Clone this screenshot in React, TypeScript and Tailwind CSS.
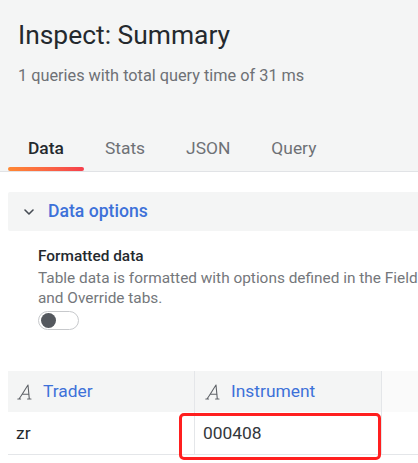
import React from 'react';

const tabs = ['Data', 'Stats', 'JSON', 'Query'];

const ChevronDown = () => (
  <svg width="10" height="6" viewBox="0 0 10 6" fill="none">
    <path d="M1 1l4 4 4-4" stroke="#464c54" strokeWidth="1.6" strokeLinecap="round" strokeLinejoin="round" />
  </svg>
);

// string field type icon (italic A)
const TypeIcon = () => (
  <svg width="16" height="16" viewBox="0 0 16 16" fill="none" className="shrink-0">
    <path
      d="M2 15C4.5 11.5 8 5.5 11 1L12.3 15M5 10.2H12M0.8 15H3.6M10.6 15H14"
      stroke="#5f6368"
      strokeWidth="1.1"
      strokeLinecap="round"
      strokeLinejoin="round"
    />
  </svg>
);

const App: React.FC = () => {
  return (
    <div className="w-[418px] h-[463px] overflow-hidden bg-white font-['Roboto',sans-serif] text-[#24292e]">
      <div className="w-[720px]">
        {/* drawer header */}
        <div className="h-[172px] bg-[#f4f5f5] border-b border-[#e1e3e6] flex flex-col">
          <div className="pl-[18px] pt-[19px]">
            <h2 className="text-[26.4px] leading-[32px] font-normal text-[#24292e]">Inspect: Summary</h2>
            <p className="mt-[15px] text-[16.3px] leading-[20px] text-[#6e7175]">
              1 queries with total query time of 31 ms
            </p>
          </div>
          <div className="mt-auto flex pl-2 gap-px">
            {tabs.map((t, i) => (
              <div key={t} className="flex flex-col px-5">
                <span
                  className={
                    i === 0
                      ? 'text-[17.4px] leading-[20px] font-medium text-[#24292e]'
                      : 'text-[17.4px] leading-[20px] text-[#6e7175]'
                  }
                >
                  {t}
                </span>
                <div
                  className={
                    i === 0
                      ? 'mt-[9px] -mx-5 h-1 rounded-[2px] bg-gradient-to-r from-[#ff8833] to-[#f53e4c]'
                      : 'mt-[9px] h-1'
                  }
                />
              </div>
            ))}
          </div>
        </div>

        <div className="px-2">
          {/* data options */}
          <div className="mt-5 h-[39px] bg-[#f4f5f5] rounded-[2px] flex items-center pl-4">
            <ChevronDown />
            <span className="ml-[14px] text-[17.6px] font-medium text-[#3d71d9]">Data options</span>
          </div>

          <div className="pl-[30px]">
            <div className="mt-[16px] text-[15.4px] leading-[19px] font-medium text-[#24292e]">Formatted data</div>
            <div className="mt-[2px] text-[15.4px] leading-[20px] text-[#74777b] w-[400px]">
              Table data is formatted with options defined in the Field and Override tabs.
            </div>
            <div className="mt-[3px] w-[41px] h-[19px] rounded-full border border-[#c7c9cc] bg-white flex items-center pl-[2px]">
              <div className="w-[15px] h-[15px] rounded-full bg-[#54585e]" />
            </div>
          </div>

          {/* table */}
          <div className="relative mt-[41px]">
            <div className="flex h-[41px]">
              <div className="w-[187px] bg-[#f4f5f5] flex items-center pl-[9px] gap-[10px] border-r border-[#e4e6e9]">
                <TypeIcon />
                <span className="text-[17.4px] text-[#3d71d9]">Trader</span>
              </div>
              <div className="w-[187px] bg-[#f4f5f5] flex items-center pl-[10px] gap-[10px] border-r border-[#e4e6e9]">
                <TypeIcon />
                <span className="text-[17.4px] text-[#3d71d9]">Instrument</span>
              </div>
              <div className="flex-1 bg-[#fafafa]" />
            </div>
            <div className="flex h-[43px] border-b border-[#e4e6e9]">
              <div className="w-[187px] flex items-center pl-2 border-r border-[#e4e6e9] text-[17.4px]">zr</div>
              <div className="w-[187px] flex items-center pl-[8px] border-r border-[#e4e6e9] text-[17.4px] text-[#33373b]">
                000408
              </div>
              <div className="flex-1" />
            </div>
            <div className="absolute left-[171px] top-[42px] w-[202px] h-[47px] border-[3px] border-[#ff1f1f] rounded-[5px]" />
          </div>
        </div>
      </div>
    </div>
  );
};

export default App;
